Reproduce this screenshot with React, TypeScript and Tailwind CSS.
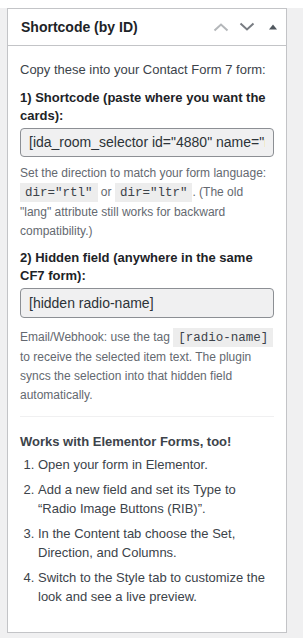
const steps = [
  "Open your form in Elementor.",
  "Add a new field and set its Type to \u201cRadio Image Buttons (RIB)\u201d.",
  "In the Content tab choose the Set, Direction, and Columns.",
  "Switch to the Style tab to customize the look and see a live preview.",
];

function Code({ children }: { children: string }) {
  return (
    <code className="bg-black/[0.07] px-[5px] pt-[3px] pb-[2px] font-['Liberation_Mono',monospace] text-[12.5px] text-[#3c434a]">
      {children}
    </code>
  );
}

function ReadonlyField({ value, tall }: { value: string; tall?: boolean }) {
  return (
    <div
      className={
        tall
          ? "mt-[3px] h-[30px] rounded-[4px] border border-[#8c8f94] bg-[#f0f0f1] px-[8px] text-[14px] leading-[28px] text-[#2c3338]"
          : "mt-[3px] h-[29px] rounded-[4px] border border-[#8c8f94] bg-[#f0f0f1] px-[8px] text-[14px] leading-[27px] text-[#2c3338]"
      }
    >
      <div className="overflow-hidden whitespace-nowrap">{value}</div>
    </div>
  );
}

function ShortcodeBox() {
  return (
    <div className="ml-[7px] mt-[8px] w-[280px] border border-[#c3c4c7] bg-white">
      <div className="flex h-[37px] items-center border-b border-[#c3c4c7] pl-[13px] pr-[8px]">
        <h2 className="flex-1 text-[14px] font-bold text-[#1d2327]">Shortcode (by ID)</h2>
        <svg width="16" height="10" viewBox="0 0 16 10" className="mr-[10px]">
          <path d="M1.5 8.5 8 2.5l6.5 6" fill="none" stroke="#b4b7ba" strokeWidth="2" />
        </svg>
        <svg width="16" height="10" viewBox="0 0 16 10" className="mr-[14px]">
          <path d="M1.5 1.5 8 7.5l6.5-6" fill="none" stroke="#787c82" strokeWidth="2" />
        </svg>
        <svg width="8" height="6" viewBox="0 0 8 6" className="mr-[1px]">
          <path d="M0 5.5 4 0.5 8 5.5z" fill="#50575e" />
        </svg>
      </div>

      <div className="px-[12px] pt-[14px] pb-[20px] text-[13px] leading-[19px] text-[#3c434a]">
        <p>Copy these into your Contact Form 7 form:</p>

        <h3 className="mt-[10px] text-[13px] font-bold leading-[18px] text-[#1d2327]">
          1) Shortcode (paste where you want the cards):
        </h3>
        <ReadonlyField value={'[ida_room_selector id="4880" name="radio-name" set="1"]'} />
        <p className="mt-[7px] text-[12px] text-[#646970]">
          Set the direction to match your form language: <Code>dir="rtl"</Code> or{" "}
          <Code>dir="ltr"</Code>. (The old "lang" attribute still works for backward compatibility.)
        </p>

        <h3 className="mt-[8px] text-[13px] font-bold leading-[18px] text-[#1d2327]">
          2) Hidden field (anywhere in the same CF7 form):
        </h3>
        <ReadonlyField value="[hidden radio-name]" tall />
        <p className="mt-[10px] text-[12px] text-[#646970]">
          Email/Webhook: use the tag <Code>[radio-name]</Code> to receive the selected item text. The
          plugin syncs the selection into that hidden field automatically.
        </p>

        <hr className="mt-[11px] border-t border-[#f0f0f1]" />

        <h4 className="mt-[16px] font-bold leading-[18px]">Works with Elementor Forms, too!</h4>
        <ol className="mt-[4px] list-decimal pl-[18px]">
          {steps.map((s) => (
            <li key={s} className="mb-[6px]">
              {s}
            </li>
          ))}
        </ol>
      </div>
    </div>
  );
}

export default function App() {
  return (
    <div className="min-h-[638px] bg-[#f0f0f1] pb-[13px] font-['Liberation_Sans',Arial,sans-serif]">
      <ShortcodeBox />
    </div>
  );
}
